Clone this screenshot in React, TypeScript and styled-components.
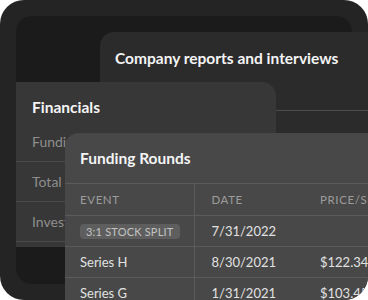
import React from 'react';
import styled, { createGlobalStyle } from 'styled-components';

const GlobalStyle = createGlobalStyle`
  body {
    margin: 0;
    background: #ffffff;
    font-family: Lato, 'Liberation Sans', sans-serif;
    -webkit-font-smoothing: antialiased;
  }
`;

const Frame = styled.div`
  position: relative;
  width: 368px;
  height: 300px;
  box-sizing: border-box;
  padding: 16px;
  border-radius: 24px;
  background: #242424;
  overflow: hidden;
`;

const Well = styled.div`
  height: 268px;
  border-radius: 16px;
  background: #1b1b1b;
`;

// stacked windows overlap one another, so they sit over the well
const Card = styled.section`
  position: absolute;
  box-sizing: border-box;
  overflow: hidden;
`;

const ReportsCard = styled(Card)`
  left: 100px;
  top: 32px;
  width: 300px;
  height: 220px;
  border-radius: 14px 0 0 0;
  background: #2b2b2b;
`;

const FinancialsCard = styled(Card)`
  left: 16px;
  top: 82px;
  width: 260px;
  height: 165px;
  border-radius: 0 14px 0 0;
  background: #373737;
`;

const FundingCard = styled(Card)`
  left: 65px;
  top: 133px;
  width: 340px;
  height: 200px;
  border-radius: 14px 0 0 0;
  background: #484848;
`;

const CardTitle = styled.h2<{ $height: number; $pad: number; $line?: string }>`
  margin: 0;
  box-sizing: border-box;
  height: ${(p) => p.$height}px;
  padding: ${(p) => p.$pad}px 15px 0;
  font-size: 15.5px;
  line-height: 20px;
  font-weight: 700;
  color: #f4f4f4;
  white-space: nowrap;
  border-bottom: ${(p) => (p.$line ? `1px solid ${p.$line}` : 'none')};
`;

const InfoRow = styled.div`
  box-sizing: border-box;
  height: 40px;
  padding-left: 16px;
  display: flex;
  align-items: center;
  font-size: 14px;
  color: #8e8e8e;
  border-bottom: 1px solid #4a4a4a;
`;

const Table = styled.table`
  border-collapse: collapse;
  width: 100%;
  table-layout: fixed;
`;

const Row = styled.tr`
  height: 31px;
  border-bottom: 1px solid #5b5b5b;
`;

const HeadCell = styled.th<{ $divider?: boolean }>`
  padding: 0 0 0 ${(p) => (p.$divider ? 15 : 17)}px;
  text-align: left;
  font-size: 11.5px;
  font-weight: 400;
  letter-spacing: 0.6px;
  color: #9c9c9c;
  white-space: nowrap;
  overflow: hidden;
  border-right: ${(p) => (p.$divider ? '1px solid #5b5b5b' : 'none')};
`;

const Cell = styled.td<{ $divider?: boolean }>`
  padding: 0 0 0 ${(p) => (p.$divider ? 15 : 17)}px;
  font-size: 13px;
  color: #e2e2e2;
  white-space: nowrap;
  overflow: hidden;
  border-right: ${(p) => (p.$divider ? '1px solid #5b5b5b' : 'none')};
`;

const Badge = styled.span`
  display: inline-block;
  padding: 0 6px;
  height: 15px;
  line-height: 15px;
  border-radius: 4px;
  background: #5e5e5e;
  color: #c2c2c2;
  font-size: 11px;
  letter-spacing: 0.2px;
  vertical-align: middle;
`;

const rounds = [
  { event: '3:1 STOCK SPLIT', badge: true, date: '7/31/2022', price: '' },
  { event: 'Series H', date: '8/30/2021', price: '$122.34' },
  { event: 'Series G', date: '1/31/2021', price: '$103.45' },
];

export default function App() {
  return (
    <>
      <GlobalStyle />
      <Frame>
        <Well />
        <ReportsCard>
          <CardTitle $height={79} $pad={16} $line='#4c4c4c'>
            Company reports and interviews
          </CardTitle>
        </ReportsCard>
        <FinancialsCard>
          <CardTitle $height={40} $pad={15} style={{ paddingLeft: 16 }}>
            Financials
          </CardTitle>
          <InfoRow>Funding</InfoRow>
          <InfoRow>Total funding</InfoRow>
          <InfoRow>Investors</InfoRow>
        </FinancialsCard>
        <FundingCard>
          <CardTitle $height={51} $pad={15} $line='#5b5b5b'>
            Funding Rounds
          </CardTitle>
          <Table>
            <colgroup>
              <col style={{ width: 129 }} />
              <col style={{ width: 109 }} />
              <col />
            </colgroup>
            <thead>
              <Row>
                <HeadCell $divider>EVENT</HeadCell>
                <HeadCell>DATE</HeadCell>
                <HeadCell>PRICE/SHARE</HeadCell>
              </Row>
            </thead>
            <tbody>
              {rounds.map((r) => (
                <Row key={r.event}>
                  <Cell $divider>
                    {r.badge ? <Badge>{r.event}</Badge> : r.event}
                  </Cell>
                  <Cell>{r.date}</Cell>
                  <Cell>{r.price}</Cell>
                </Row>
              ))}
            </tbody>
          </Table>
        </FundingCard>
      </Frame>
    </>
  );
}
